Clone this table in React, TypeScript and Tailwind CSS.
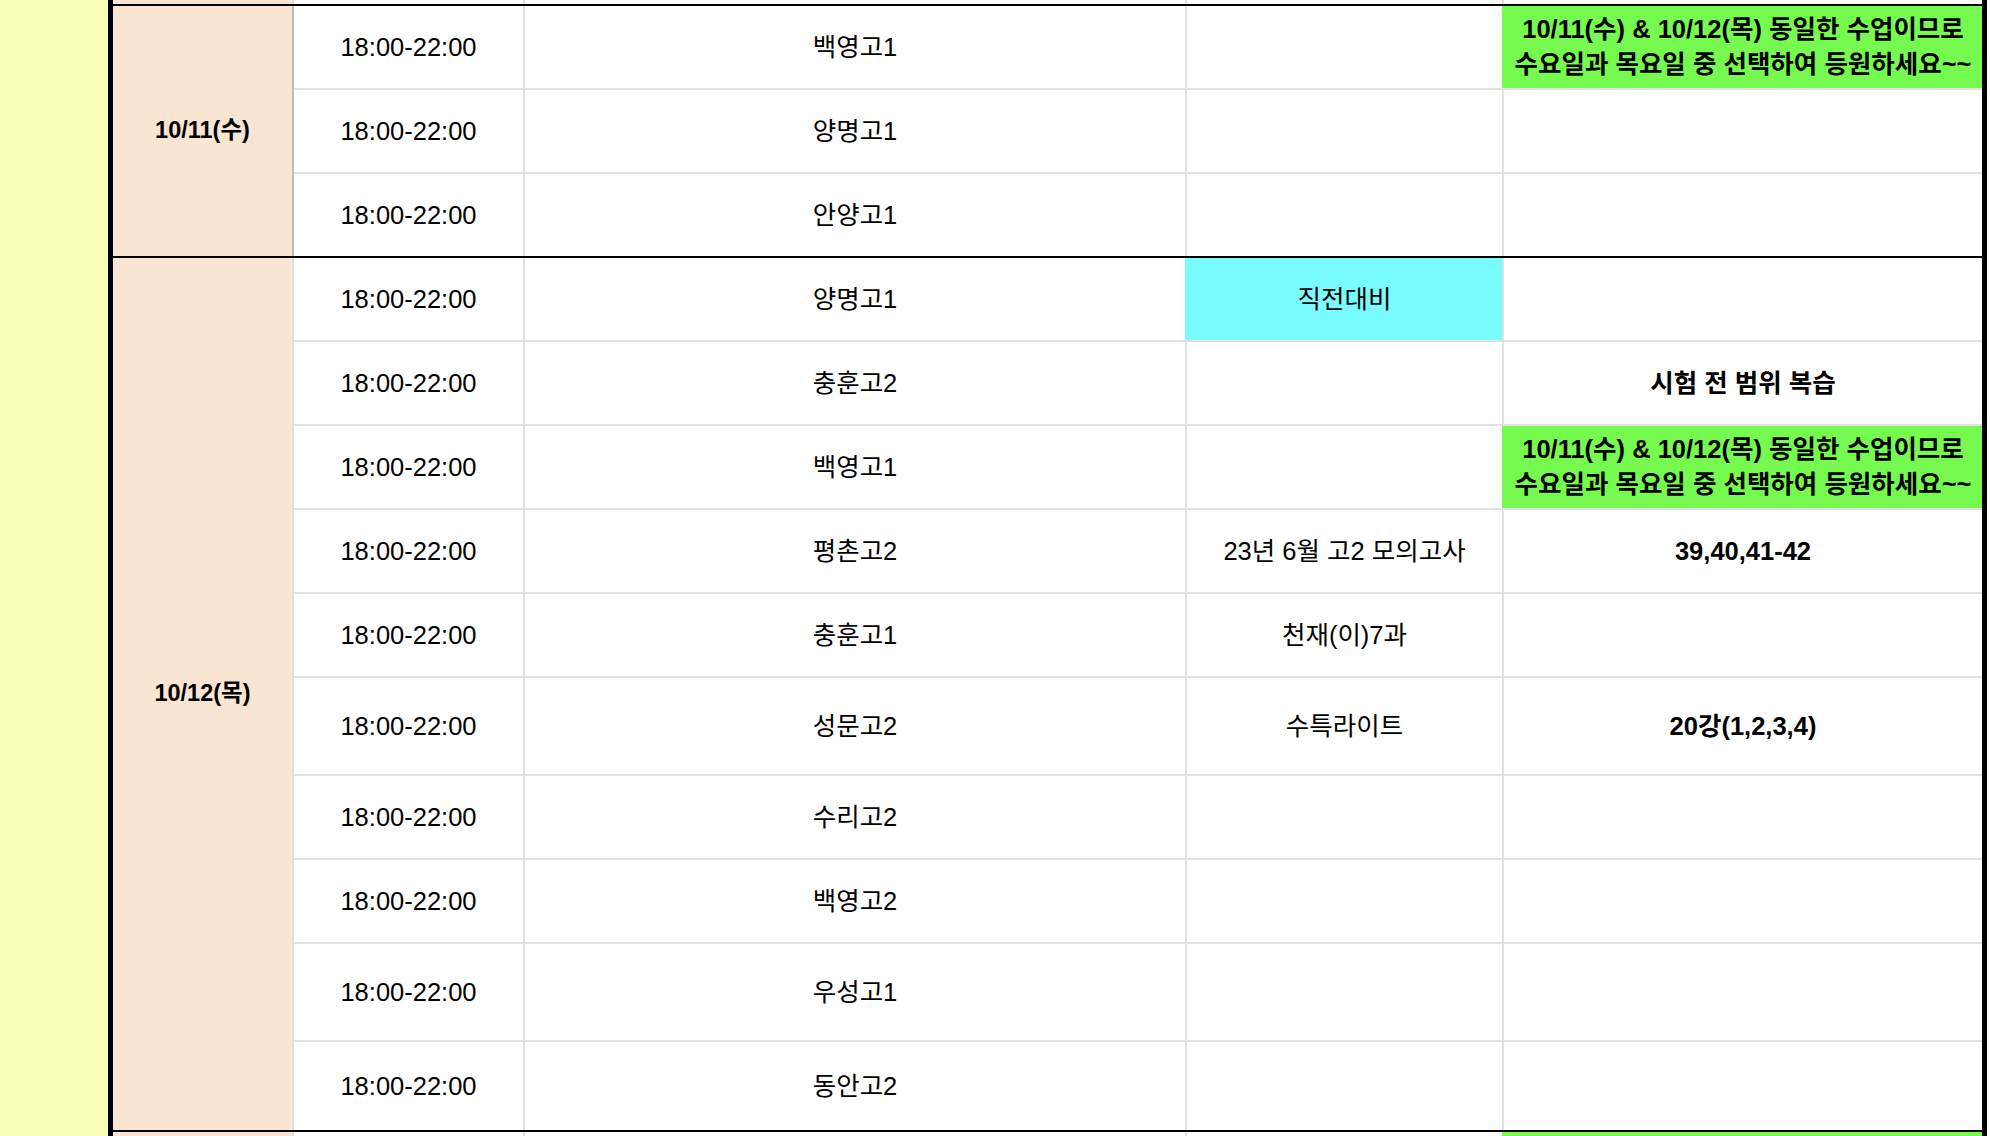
import React from 'react';

type Row = {
  time: string;
  school: string;
  note?: string;
  noteBg?: string;
  memo?: string[];
  memoBg?: string;
  h?: string;
};

type Block = {
  date: string;
  rows: Row[];
};

const SAME_CLASS = [
  '10/11(수) & 10/12(목) 동일한 수업이므로',
  '수요일과 목요일 중 선택하여 등원하세요~~',
];

const blocks: Block[] = [
  {
    date: '10/11(수)',
    rows: [
      { time: '18:00-22:00', school: '백영고1', memo: SAME_CLASS, memoBg: 'green' },
      { time: '18:00-22:00', school: '양명고1' },
      { time: '18:00-22:00', school: '안양고1', h: 'h-[82px]' },
    ],
  },
  {
    date: '10/12(목)',
    rows: [
      { time: '18:00-22:00', school: '양명고1', note: '직전대비', noteBg: 'cyan' },
      { time: '18:00-22:00', school: '충훈고2', memo: ['시험 전 범위 복습'] },
      { time: '18:00-22:00', school: '백영고1', memo: SAME_CLASS, memoBg: 'green' },
      { time: '18:00-22:00', school: '평촌고2', note: '23년 6월 고2 모의고사', memo: ['39,40,41-42'] },
      { time: '18:00-22:00', school: '충훈고1', note: '천재(이)7과' },
      { time: '18:00-22:00', school: '성문고2', note: '수특라이트', memo: ['20강(1,2,3,4)'], h: 'h-[98px]' },
      { time: '18:00-22:00', school: '수리고2' },
      { time: '18:00-22:00', school: '백영고2' },
      { time: '18:00-22:00', school: '우성고1', h: 'h-[98px]' },
      { time: '18:00-22:00', school: '동안고2', h: 'h-[88px]' },
    ],
  },
];

const font = { fontFamily: '"Liberation Sans", "Noto Sans CJK KR", sans-serif' };

function ScheduleRow({ row, last }: { row: Row; last: boolean }) {
  const cyan = row.noteBg === 'cyan';
  const green = row.memoBg === 'green';
  return (
    <div className={`flex ${row.h ?? 'h-[84px]'} ${last ? '' : 'border-b-2 border-[#e1e1e1]'}`}>
      <div className="w-[231px] shrink-0 border-r-2 border-[#e1e1e1] flex items-center justify-center">
        {row.time}
      </div>
      <div
        className={`w-[662px] shrink-0 border-r-2 flex items-center justify-center ${
          cyan ? 'border-[#79fcfe]' : 'border-[#e1e1e1]'
        }`}
      >
        {row.school}
      </div>
      <div
        className={`w-[317px] shrink-0 border-r-2 flex items-center justify-center ${
          cyan ? 'bg-[#79fcfe]' : ''
        } ${green ? 'border-[#77fa4f]' : 'border-[#e1e1e1]'}`}
      >
        {row.note}
      </div>
      <div
        className={`flex-1 flex flex-col items-center justify-center font-bold leading-[35px] ${
          green ? 'bg-[#77fa4f]' : ''
        }`}
      >
        {row.memo?.map((line) => (
          <span key={line}>{line}</span>
        ))}
      </div>
    </div>
  );
}

function DayBlock({ block }: { block: Block }) {
  const first = block.date === '10/11(수)';
  return (
    <div className="flex border-b-2 border-black">
      <div
        className={`w-[181px] shrink-0 bg-[#f9e5d2] border-r-2 flex items-center justify-center font-bold text-[23.5px] ${
          first ? 'border-[#bcbcbc]' : 'border-[#e1e1e1]'
        }`}
      >
        {block.date}
      </div>
      <div className="flex-1 flex flex-col">
        {block.rows.map((row, i) => (
          <ScheduleRow key={i} row={row} last={i === block.rows.length - 1} />
        ))}
      </div>
    </div>
  );
}

export default function App() {
  return (
    <div className="w-[1990px] h-[1136px] overflow-hidden flex bg-white text-black text-[25.5px]" style={font}>
      <div className="w-[108px] shrink-0 bg-[#f9feb6]" />
      <div className="w-[5px] shrink-0 bg-black" />
      <div className="w-[1869px] shrink-0 flex flex-col">
        {/* tail of the previous day */}
        <div className="flex h-[4px] shrink-0 border-b-2 border-black box-content">
          <div className="w-[181px] shrink-0 bg-[#f9e5d2] border-r-2 border-[#e1e1e1]" />
          <div className="w-[231px] shrink-0 border-r-2 border-[#e1e1e1]" />
          <div className="w-[662px] shrink-0 border-r-2 border-[#e1e1e1]" />
          <div className="w-[317px] shrink-0 border-r-2 border-[#e1e1e1]" />
          <div className="flex-1" />
        </div>
        {blocks.map((block) => (
          <DayBlock key={block.date} block={block} />
        ))}
        {/* head of the next day */}
        <div className="flex flex-1">
          <div className="w-[181px] shrink-0 bg-[#f9e5d2] border-r-2 border-[#e1e1e1]" />
          <div className="w-[231px] shrink-0 border-r-2 border-[#e1e1e1]" />
          <div className="w-[662px] shrink-0 border-r-2 border-[#e1e1e1]" />
          <div className="w-[317px] shrink-0 border-r-2 border-[#77fa4f]" />
          <div className="flex-1 bg-[#77fa4f]" />
        </div>
      </div>
      <div className="w-[5px] shrink-0 bg-black" />
      <div className="flex-1 bg-white" />
    </div>
  );
}
